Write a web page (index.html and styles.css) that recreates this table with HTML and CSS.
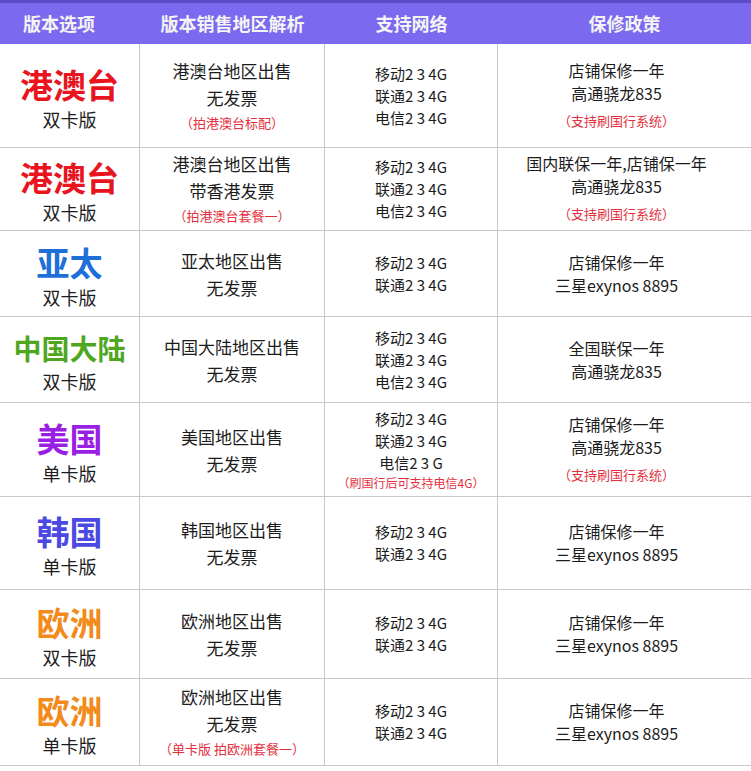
FILE: index.html
```html
<!DOCTYPE html>
<html lang="zh-CN">
<head>
<meta charset="utf-8">
<title>版本选项</title>
<link rel="stylesheet" href="styles.css">
</head>
<body>
<div class="table">
  <div class="head h-ver">版本选项</div>
  <div class="head">版本销售地区解析</div>
  <div class="head">支持网络</div>
  <div class="head">保修政策</div>

  <div class="cell ver"><div class="big red">港澳台</div><div class="sub">双卡版</div></div>
  <div class="cell sale"><div>港澳台地区出售</div><div>无发票</div><div class="note">（拍港澳台标配）</div></div>
  <div class="cell net"><div>移动2 3 4G</div><div>联通2 3 4G</div><div>电信2 3 4G</div></div>
  <div class="cell warr"><div>店铺保修一年</div><div>高通骁龙835</div><div class="note">（支持刷国行系统）</div></div>

  <div class="cell ver"><div class="big red">港澳台</div><div class="sub">双卡版</div></div>
  <div class="cell sale"><div>港澳台地区出售</div><div>带香港发票</div><div class="note">（拍港澳台套餐一）</div></div>
  <div class="cell net"><div>移动2 3 4G</div><div>联通2 3 4G</div><div>电信2 3 4G</div></div>
  <div class="cell warr"><div>国内联保一年,店铺保一年</div><div>高通骁龙835</div><div class="note">（支持刷国行系统）</div></div>

  <div class="cell ver"><div class="big blue">亚太</div><div class="sub">双卡版</div></div>
  <div class="cell sale"><div>亚太地区出售</div><div>无发票</div></div>
  <div class="cell net"><div>移动2 3 4G</div><div>联通2 3 4G</div></div>
  <div class="cell warr"><div>店铺保修一年</div><div>三星exynos 8895</div></div>

  <div class="cell ver"><div class="big green">中国大陆</div><div class="sub">双卡版</div></div>
  <div class="cell sale"><div>中国大陆地区出售</div><div>无发票</div></div>
  <div class="cell net"><div>移动2 3 4G</div><div>联通2 3 4G</div><div>电信2 3 4G</div></div>
  <div class="cell warr"><div>全国联保一年</div><div>高通骁龙835</div></div>

  <div class="cell ver"><div class="big purple">美国</div><div class="sub">单卡版</div></div>
  <div class="cell sale"><div>美国地区出售</div><div>无发票</div></div>
  <div class="cell net"><div>移动2 3 4G</div><div>联通2 3 4G</div><div>电信2 3 G</div><div class="note small">（刷国行后可支持电信4G）</div></div>
  <div class="cell warr"><div>店铺保修一年</div><div>高通骁龙835</div><div class="note">（支持刷国行系统）</div></div>

  <div class="cell ver"><div class="big violet">韩国</div><div class="sub">单卡版</div></div>
  <div class="cell sale"><div>韩国地区出售</div><div>无发票</div></div>
  <div class="cell net"><div>移动2 3 4G</div><div>联通2 3 4G</div></div>
  <div class="cell warr"><div>店铺保修一年</div><div>三星exynos 8895</div></div>

  <div class="cell ver"><div class="big orange">欧洲</div><div class="sub">双卡版</div></div>
  <div class="cell sale"><div>欧洲地区出售</div><div>无发票</div></div>
  <div class="cell net"><div>移动2 3 4G</div><div>联通2 3 4G</div></div>
  <div class="cell warr"><div>店铺保修一年</div><div>三星exynos 8895</div></div>

  <div class="cell ver"><div class="big orange">欧洲</div><div class="sub">单卡版</div></div>
  <div class="cell sale"><div>欧洲地区出售</div><div>无发票</div><div class="note">（单卡版 拍欧洲套餐一）</div></div>
  <div class="cell net"><div>移动2 3 4G</div><div>联通2 3 4G</div></div>
  <div class="cell warr"><div>店铺保修一年</div><div>三星exynos 8895</div></div>
</div>
</body>
</html>
```
FILE: styles.css
```css
* { box-sizing: border-box; }
html, body { margin: 0; padding: 0; background: #fff; }
body {
  font-family: "Noto Sans CJK SC", "Noto Sans", sans-serif;
  color: #1c1c1c;
  width: 751px;
}
.table {
  display: grid;
  grid-template-columns: 140px 185px 173px 253px;
  grid-template-rows: 44px 104px 83px 86px 86px 94px 93px 89px 87px;
}
.head {
  background: #7b69ef;
  border-top: 3px solid #5b4bc6;
  color: #f4f4f4;
  font-weight: bold;
  font-size: 18px;
  display: flex;
  align-items: center;
  justify-content: center;
  padding-bottom: 2px;
}
.h-ver { padding-right: 22px; }
.cell {
  display: flex;
  flex-direction: column;
  align-items: center;
  justify-content: center;
  text-align: center;
  border-bottom: 1px solid #c9c9c9;
  border-right: 1px solid #c9c9c9;
  white-space: nowrap;
}
.warr { border-right: none; padding-right: 16px; }
.ver { padding-top: 10px; }
.big {
  font-size: 33px;
  font-weight: bold;
  line-height: 36px;
}
.big.green { font-size: 28px; line-height: 32px; }
.sub { font-size: 18px; line-height: 34px; }
.red { color: #e8141e; }
.blue { color: #1e6fd8; }
.green { color: #4fa61f; }
.purple { color: #9a1fe4; }
.violet { color: #4b49e2; }
.orange { color: #f28a1c; }
.sale { font-size: 17px; line-height: 27px; }
.net { font-size: 15px; line-height: 22px; }
.warr { font-size: 16px; line-height: 23px; }
.note { color: #e4303e; font-size: 13px; line-height: 24px; }
.warr .note { margin-top: 4px; }
.note.small { font-size: 12px; line-height: 18px; }
```
